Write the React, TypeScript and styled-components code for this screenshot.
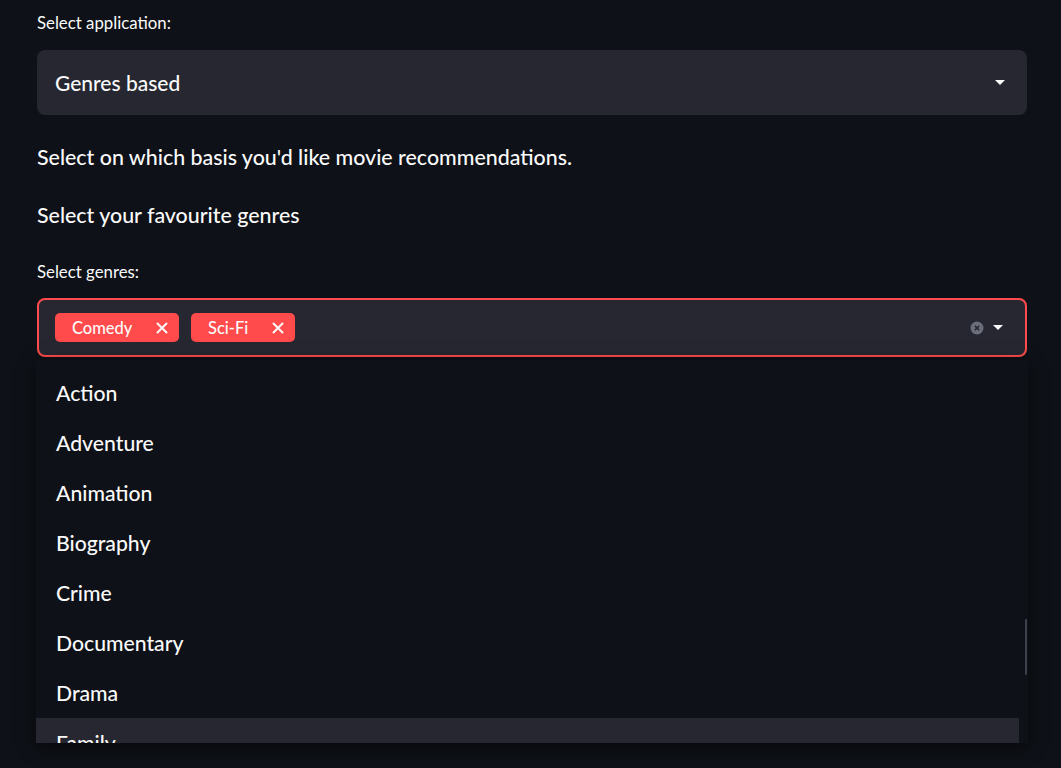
import React from 'react'
import styled, { createGlobalStyle } from 'styled-components'

const GlobalStyle = createGlobalStyle`
  html, body {
    margin: 0;
    background: #0e1117;
    color: #fafafa;
    font-family: "Lato", "Open Sans", sans-serif;
  }
`

const Main = styled.main`
  position: relative;
  box-sizing: border-box;
  width: 1061px;
  min-height: 768px;
  padding: 12px 34px 0 37px;
`

const Label = styled.div`
  font-size: 16.8px;
  line-height: 22px;
  height: 22px;
  margin-bottom: 16px;
`

const SelectBox = styled.div`
  display: flex;
  align-items: center;
  height: 65px;
  padding: 0 22px 0 18px;
  border-radius: 8px;
  background: #262730;
  font-size: 21px;
  font-weight: 500;
`

const Value = styled.div`
  flex: 1;
`

const Caret = styled.span`
  width: 0;
  height: 0;
  border-left: 5px solid transparent;
  border-right: 5px solid transparent;
  border-top: 5px solid #fafafa;
`

const Text = styled.p`
  margin: 0;
  font-size: 21.4px;
  font-weight: 500;
  line-height: 28px;
  padding-top: ${p => p.$top}px;
`

const GenresLabel = styled(Label)`
  margin-top: 32px;
  margin-bottom: 15px;
`

const Field = styled.div`
  position: relative;
`

const MultiBox = styled.div`
  display: flex;
  align-items: center;
  gap: 12px;
  height: 59px;
  box-sizing: border-box;
  padding: 0 22px 0 16px;
  border: 2px solid #ff4b4b;
  border-radius: 8px;
  background: #262730;
`

const Chip = styled.span`
  display: flex;
  align-items: center;
  justify-content: space-between;
  box-sizing: border-box;
  width: ${p => p.$w}px;
  height: 29px;
  padding: 0 11px 0 17px;
  border-radius: 5px;
  background: #ff4b4b;
  font-size: 16.5px;
  font-weight: 500;
`

const Spacer = styled.div`
  flex: 1;
`

const ClearIcon = styled.span`
  display: flex;
  margin-right: -3px;
`

const Menu = styled.div`
  position: absolute;
  z-index: 10;
  top: 62px;
  left: -1px;
  width: 992px;
  height: 383px;
  overflow: hidden;
  background: #0e1117;
  box-shadow: 0 4px 16px rgba(0, 0, 0, 0.55);
`

const List = styled.ul`
  list-style: none;
  margin: 0;
  padding: 8px 0 0;
  width: 983px;
`

const Option = styled.li`
  height: 50px;
  display: flex;
  align-items: center;
  padding-left: 20px;
  font-size: 21.2px;
  font-weight: 500;
  color: #fafafa;
  background: ${p => (p.$active ? '#262730' : 'transparent')};
`

const Thumb = styled.div`
  position: absolute;
  right: 1px;
  top: 259px;
  width: 2px;
  height: 56px;
  border-radius: 1px;
  background: #3d4049;
`

const XIcon = () => (
  <svg width="12" height="12" viewBox="0 0 12 12">
    <path d="M1.5 1.5 L10.5 10.5 M10.5 1.5 L1.5 10.5" stroke="#fafafa" strokeWidth="2" strokeLinecap="round" />
  </svg>
)

const genres = ['Action', 'Adventure', 'Animation', 'Biography', 'Crime', 'Documentary', 'Drama', 'Family']

export default function App() {
  return (
    <>
      <GlobalStyle />
      <Main>
        <Label>Select application:</Label>
        <SelectBox>
          <Value>Genres based</Value>
          <Caret />
        </SelectBox>
        <Text $top={28}>Select on which basis you'd like movie recommendations.</Text>
        <Text $top={30}>Select your favourite genres</Text>
        <GenresLabel>Select genres:</GenresLabel>
        <Field>
          <MultiBox>
            <Chip $w={124}>Comedy <XIcon /></Chip>
            <Chip $w={104}>Sci-Fi <XIcon /></Chip>
            <Spacer />
            <ClearIcon>
              <svg width="14" height="14" viewBox="0 0 14 14">
                <circle cx="7" cy="7" r="6.5" fill="#6b6e7b" />
                <path d="M4.8 4.8 L9.2 9.2 M9.2 4.8 L4.8 9.2" stroke="#262730" strokeWidth="1.6" />
              </svg>
            </ClearIcon>
            <Caret />
          </MultiBox>
          <Menu>
            <List>
              {genres.map(g => (
                <Option key={g} $active={g === 'Family'}>{g}</Option>
              ))}
            </List>
            <Thumb />
          </Menu>
        </Field>
      </Main>
    </>
  )
}
